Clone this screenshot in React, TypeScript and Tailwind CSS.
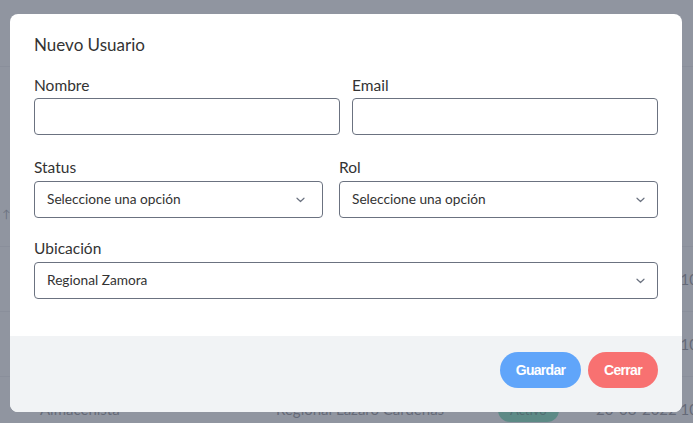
import React from "react";

function Chevron() {
  return (
    <svg width="9" height="6" viewBox="0 0 9 6" fill="none">
      <path d="M1 1.2l3.5 3.3 3.5-3.3" stroke="#6b7280" strokeWidth="1.2" strokeLinecap="round" strokeLinejoin="round" />
    </svg>
  );
}

function Select({ text, pr }: { text: string; pr: string }) {
  return (
    <div
      className={`flex h-[37px] items-center justify-between rounded-[4px] border border-[#6b7280] bg-white pl-[12px] ${pr} text-[13.7px] text-[#333333]`}
    >
      <span>{text}</span>
      <Chevron />
    </div>
  );
}

export default function App() {
  return (
    <div className="relative h-[423px] w-[693px] overflow-hidden bg-white font-['Lato',sans-serif]">
      {/* background page */}
      <div className="flex h-full flex-col">
        <div className="h-[67px] shrink-0 border-b border-[#e5e7eb] bg-white" />
        <div className="h-[115px] shrink-0" />
        <div className="flex h-[65px] shrink-0 items-center border-b border-[#e5e7eb] pl-[2px] text-[11px] text-[#6b7280]">
          ↑↓
        </div>
        {["a", "b", "c"].map((k, i) => (
          <div
            key={k}
            className="flex h-[65px] shrink-0 items-center whitespace-nowrap border-b border-[#e5e7eb] text-[15px] text-[#52525b]"
          >
            <span className="w-[276px] shrink-0 pl-[40px]">{i === 2 ? "Almacenista" : ""}</span>
            <span className="w-[222px] shrink-0">{i === 2 ? "Regional Lazaro Cardenas" : ""}</span>
            <span className="w-[98px] shrink-0">
              {i === 2 ? (
                <span className="rounded-full bg-[#34d399] px-[12px] py-[4px] text-[13px] text-[#065f46]">Activo</span>
              ) : null}
            </span>
            <span className="shrink-0">20-08-2022 10:30</span>
          </div>
        ))}
      </div>

      {/* overlay */}
      <div className="absolute inset-0 bg-[#6b7280]/75" />

      {/* modal */}
      <div className="absolute left-[10px] top-[14px] flex h-[398px] w-[672px] flex-col overflow-hidden rounded-lg bg-white">
        <div className="px-6 pt-[19px]">
          <h2 className="text-[17px] leading-6 text-[#333333]">Nuevo Usuario</h2>

          <div className="mt-[18px] grid grid-cols-2 gap-x-3">
            <div className="flex flex-col">
              <label className="mb-[3px] text-[15.5px] leading-5 text-[#333333]">Nombre</label>
              <div className="h-[37px] rounded-[4px] border border-[#6b7280] bg-white" />
            </div>
            <div className="flex flex-col">
              <label className="mb-[3px] text-[15.5px] leading-5 text-[#333333]">Email</label>
              <div className="h-[37px] rounded-[4px] border border-[#6b7280] bg-white" />
            </div>
          </div>

          <div className="mt-[22px] flex gap-4">
            <div className="flex w-[289px] flex-col">
              <label className="mb-[4px] text-[15.5px] leading-5 text-[#333333]">Status</label>
              <Select text="Seleccione una opción" pr="pr-[17px]" />
            </div>
            <div className="flex flex-1 flex-col">
              <label className="mb-[4px] text-[15.5px] leading-5 text-[#333333]">Rol</label>
              <Select text="Seleccione una opción" pr="pr-[12px]" />
            </div>
          </div>

          <div className="mt-5 flex flex-col">
            <label className="mb-[4px] text-[15.5px] leading-5 text-[#333333]">Ubicación</label>
            <Select text="Regional Zamora" pr="pr-[12px]" />
          </div>
        </div>

        <div className="mt-auto flex h-[76px] justify-end gap-[7px] bg-[#f1f3f5] pr-6 pt-4">
          <button className="h-9 w-[81px] rounded-full bg-[#60a5fa] font-['Liberation_Sans',sans-serif] text-[14px] font-bold tracking-[-0.05em] text-white">
            Guardar
          </button>
          <button className="h-9 w-[70px] rounded-full bg-[#f87171] font-['Liberation_Sans',sans-serif] text-[14px] font-bold tracking-[-0.05em] text-white">
            Cerrar
          </button>
        </div>
      </div>
    </div>
  );
}
